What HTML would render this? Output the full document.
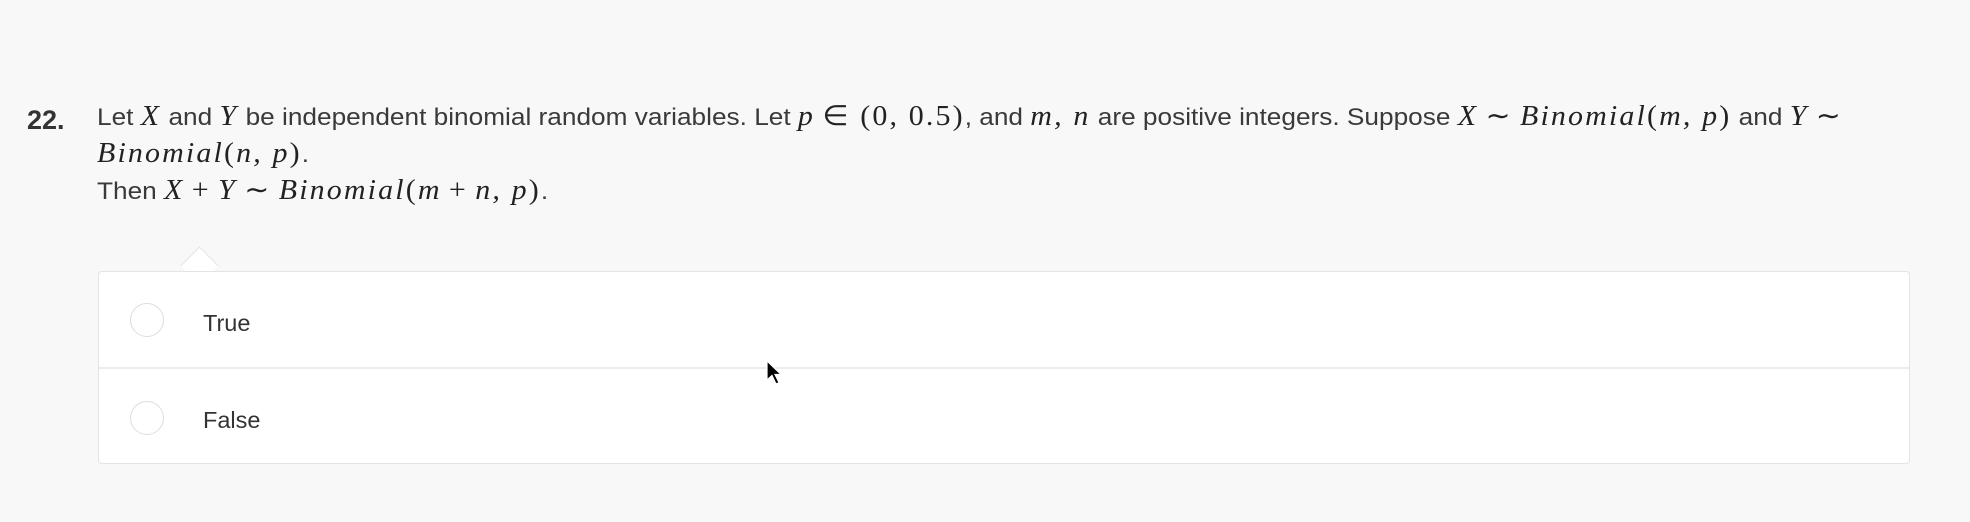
<!DOCTYPE html>
<html><head><meta charset="utf-8"><style>
html,body{margin:0;padding:0;}
body{width:1970px;height:522px;background:#f8f8f8;position:relative;overflow:hidden;font-family:"Liberation Sans",sans-serif;color:#333;}
.num{position:absolute;left:27px;top:103px;font-size:27px;font-weight:bold;color:#333;line-height:35px;}
.ln{position:absolute;left:97px;font-size:24.5px;line-height:35px;white-space:nowrap;color:#3a3a3a;transform:scaleX(1.07);transform-origin:0 0;}
.m{font-family:"Liberation Serif",serif;font-style:italic;font-size:28px;color:#222;letter-spacing:2px;}
.r{font-family:"Liberation Serif",serif;font-size:28px;color:#222;letter-spacing:2px;}
.box{position:absolute;left:98px;top:271px;width:1810px;height:191px;background:#fff;border:1px solid #e4e4e4;border-radius:4px;}
.div{position:absolute;left:0;right:0;top:95px;height:2px;background:#ececec;}
.arrow{position:absolute;left:186px;top:252px;width:26px;height:26px;background:#fff;border-left:1px solid #e4e4e4;border-top:1px solid #e4e4e4;transform:rotate(45deg);transform-origin:center;}
.arrowcov{position:absolute;left:180px;top:272px;width:40px;height:10px;background:#fff;}
.rad{position:absolute;left:130px;width:32px;height:32px;border:1.5px solid #ddd;border-radius:50%;background:#fff;}
.opt{position:absolute;left:203px;font-size:23.5px;color:#333;}
</style></head><body>
<div class="num">22.</div>
<div class="ln" style="top:99px">Let <span class="m">X</span> and <span class="m">Y</span> be independent binomial random variables. Let <span class="m">p</span> <span class="r">∈ (0, 0.5)</span>, and <span class="m">m, n</span> are positive integers. Suppose <span class="m">X</span> <span class="r">∼</span> <span class="m">Binomial</span><span class="r">(</span><span class="m">m, p</span><span class="r">)</span> and <span class="m">Y</span> <span class="r">∼</span></div>
<div class="ln" style="top:136px"><span class="m">Binomial</span><span class="r">(</span><span class="m">n, p</span><span class="r">)</span>.</div>
<div class="ln" style="top:173px">Then <span class="m">X</span> <span class="r">+</span> <span class="m">Y</span> <span class="r">∼</span> <span class="m">Binomial</span><span class="r">(</span><span class="m">m</span> <span class="r">+</span> <span class="m">n, p</span><span class="r">)</span>.</div>
<div class="arrow"></div>
<div class="box"><div class="div"></div></div>
<div class="arrowcov"></div>
<div class="rad" style="top:303px"></div>
<div class="opt" style="top:310px">True</div>
<div class="rad" style="top:401px"></div>
<div class="opt" style="top:407px">False</div>
<svg style="position:absolute;left:766px;top:360px" width="20" height="28" viewBox="0 0 20 28"><path d="M1 1 L1 20 L6 15.5 L10 24 L13 22.5 L9 14.5 L15 14.5 Z" fill="#000" stroke="#fff" stroke-width="1.2"/></svg>
</body></html>
